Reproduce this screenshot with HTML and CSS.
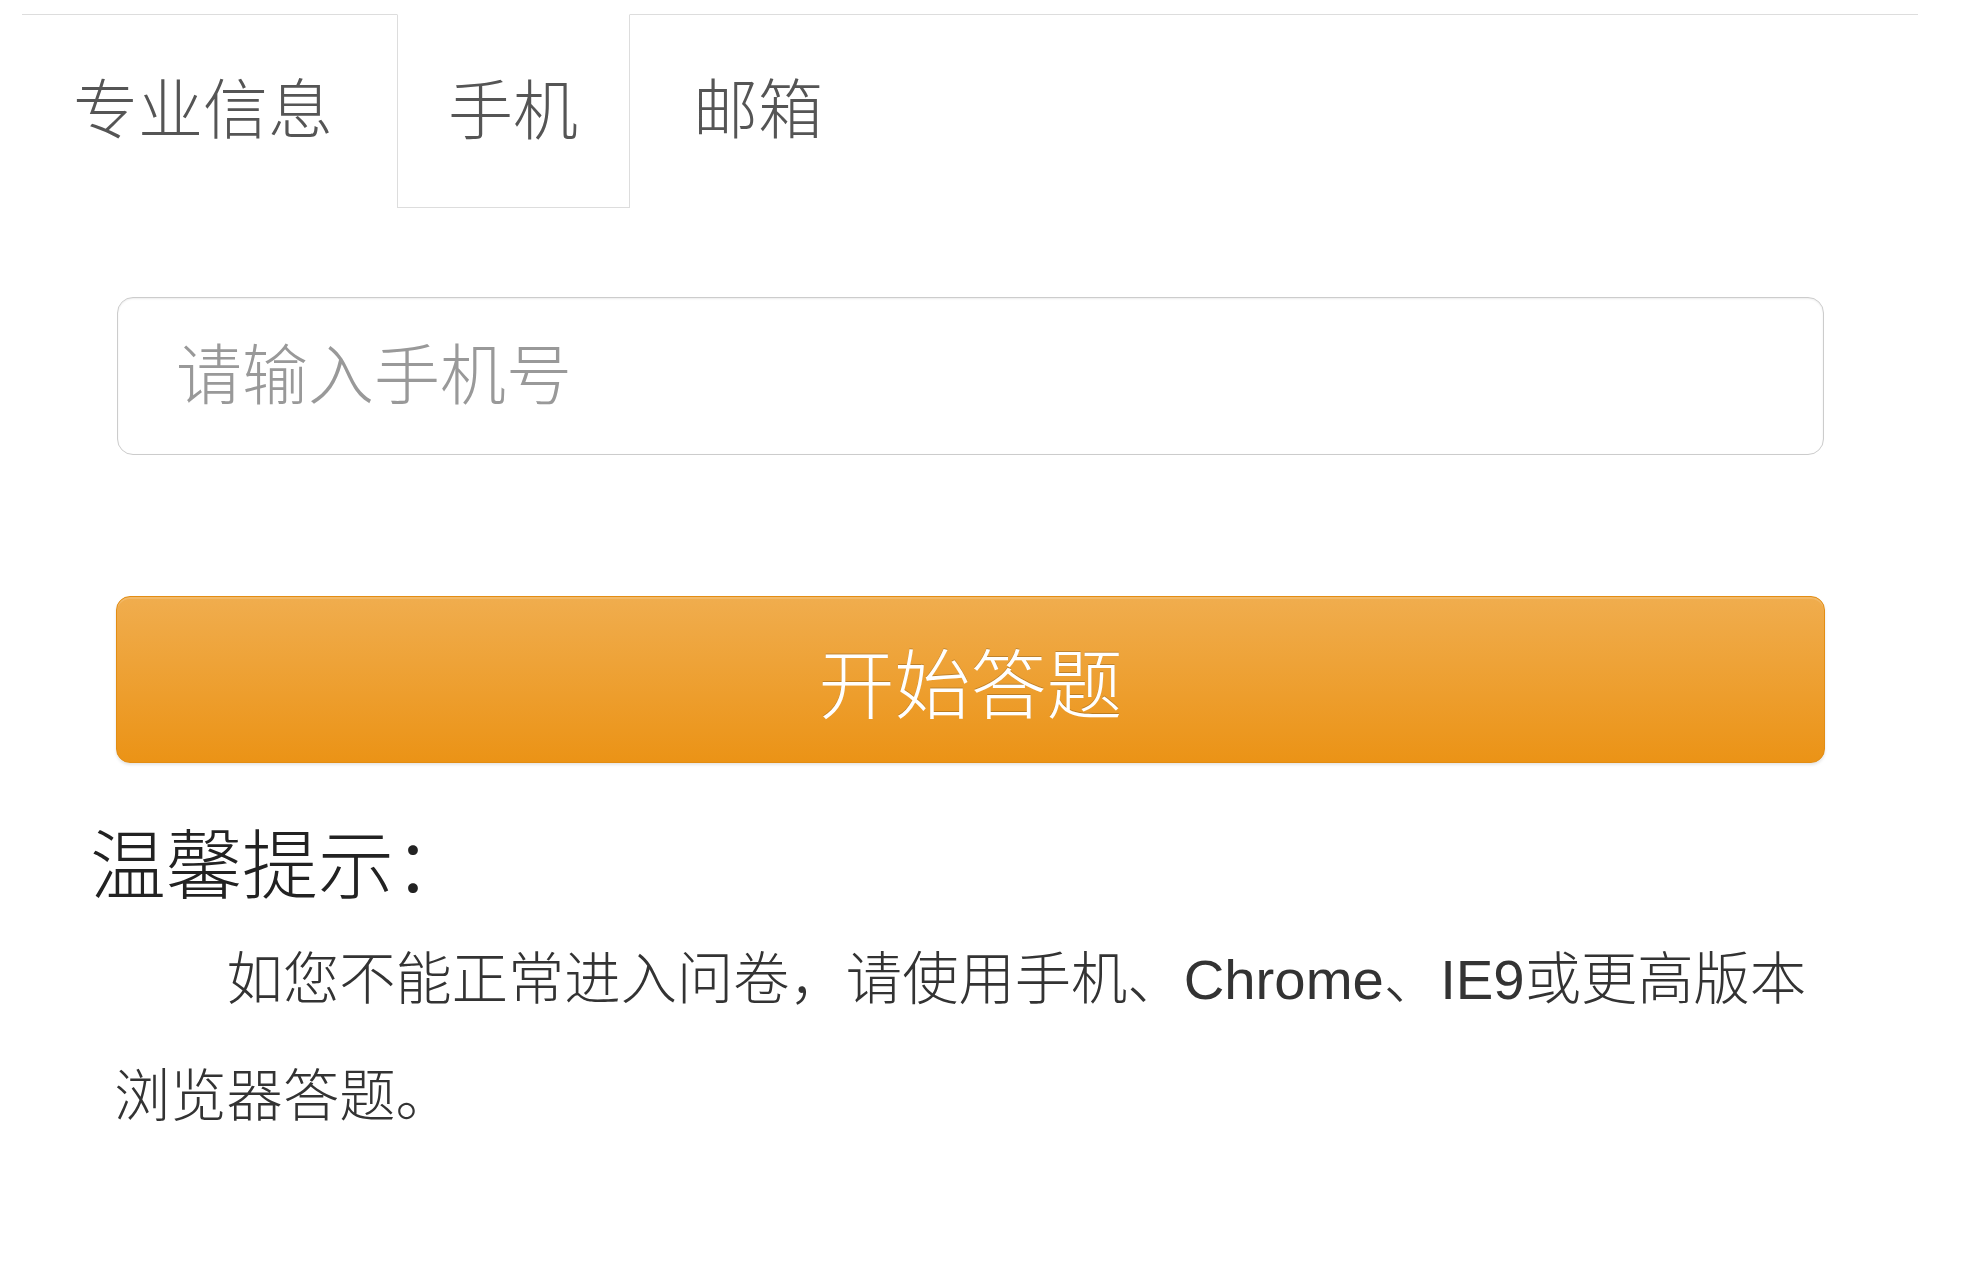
FILE: index.html
```html
<!DOCTYPE html>
<html lang="zh-CN">
<head>
<meta charset="utf-8">
<title>开始答题</title>
<link rel="stylesheet" href="styles.css">
</head>
<body>
<ul class="tabs">
  <li class="tab">专业信息</li>
  <li class="tab tab-active">手机</li>
  <li class="tab">邮箱</li>
</ul>
<div class="panel">
  <input class="field" type="text" placeholder="请输入手机号">
  <button class="btn-start" type="button">开始答题</button>
</div>
<div class="tips">
  <h3 class="tips-title">温馨提示：</h3>
  <p class="tips-text">如您不能正常进入问卷，请使用手机、Chrome、IE9或更高版本浏览器答题。</p>
</div>
</body>
</html>
```
FILE: styles.css
```css
html, body {
  margin: 0;
  padding: 0;
  background: #fff;
}
body {
  font-family: "Liberation Sans", "Noto Sans CJK SC", sans-serif;
  color: #333;
}
.tabs {
  list-style: none;
  margin: 14px 51px 0 22px;
  padding: 0;
  border-top: 1px solid #ddd;
  display: flex;
}
.tab {
  font-size: 65px;
  font-weight: 300;
  line-height: 192px;
  height: 192px;
  padding: 0 51px 0 50px;
  margin-right: 12px;
  color: #555;
  box-sizing: border-box;
  border: 1px solid transparent;
  border-top: 0;
}
.tab-active {
  margin-top: -1px;
  height: 194px;
  line-height: 194px;
  border: 1px solid #ddd;
  border-top: 1px solid #fff;
  background: #fff;
}
.panel {
  margin: 89px 144px 0 116px;
  display: flex;
  flex-direction: column;
}
.field {
  box-sizing: border-box;
  height: 158px;
  margin: 0 1px;
  padding: 0 58px;
  font-family: "Liberation Sans", "Noto Sans CJK SC", sans-serif;
  font-size: 66px;
  font-weight: 300;
  color: #555;
  border: 1px solid #ccc;
  border-radius: 16px;
  box-shadow: inset 0 1px 2px rgba(0, 0, 0, 0.08);
  outline: none;
  background: #fff;
}
.field::placeholder {
  color: #999;
}
.btn-start {
  box-sizing: border-box;
  margin-top: 141px;
  height: 167px;
  font-family: "Liberation Sans", "Noto Sans CJK SC", sans-serif;
  font-size: 76px;
  font-weight: 300;
  color: #fff;
  text-shadow: 0 -1px 0 rgba(0, 0, 0, 0.2);
  background-image: linear-gradient(to bottom, #f0ad4e 0, #eb9316 100%);
  border: 1px solid #e38d13;
  border-radius: 14px;
  box-shadow: inset 0 2px 0 rgba(255, 255, 255, 0.15), 0 2px 3px rgba(0, 0, 0, 0.1);
  padding: 0;
  cursor: pointer;
}
.tips {
  margin: 58px 139px 0 90px;
}
.tips-title {
  margin: 0;
  font-size: 76px;
  font-weight: 300;
  line-height: 92px;
  color: #222;
}
.tips-text {
  margin: 8px 0 0 24px;
  font-size: 56.3px;
  font-weight: 300;
  line-height: 117px;
  text-indent: 2em;
  color: #333;
}
```
